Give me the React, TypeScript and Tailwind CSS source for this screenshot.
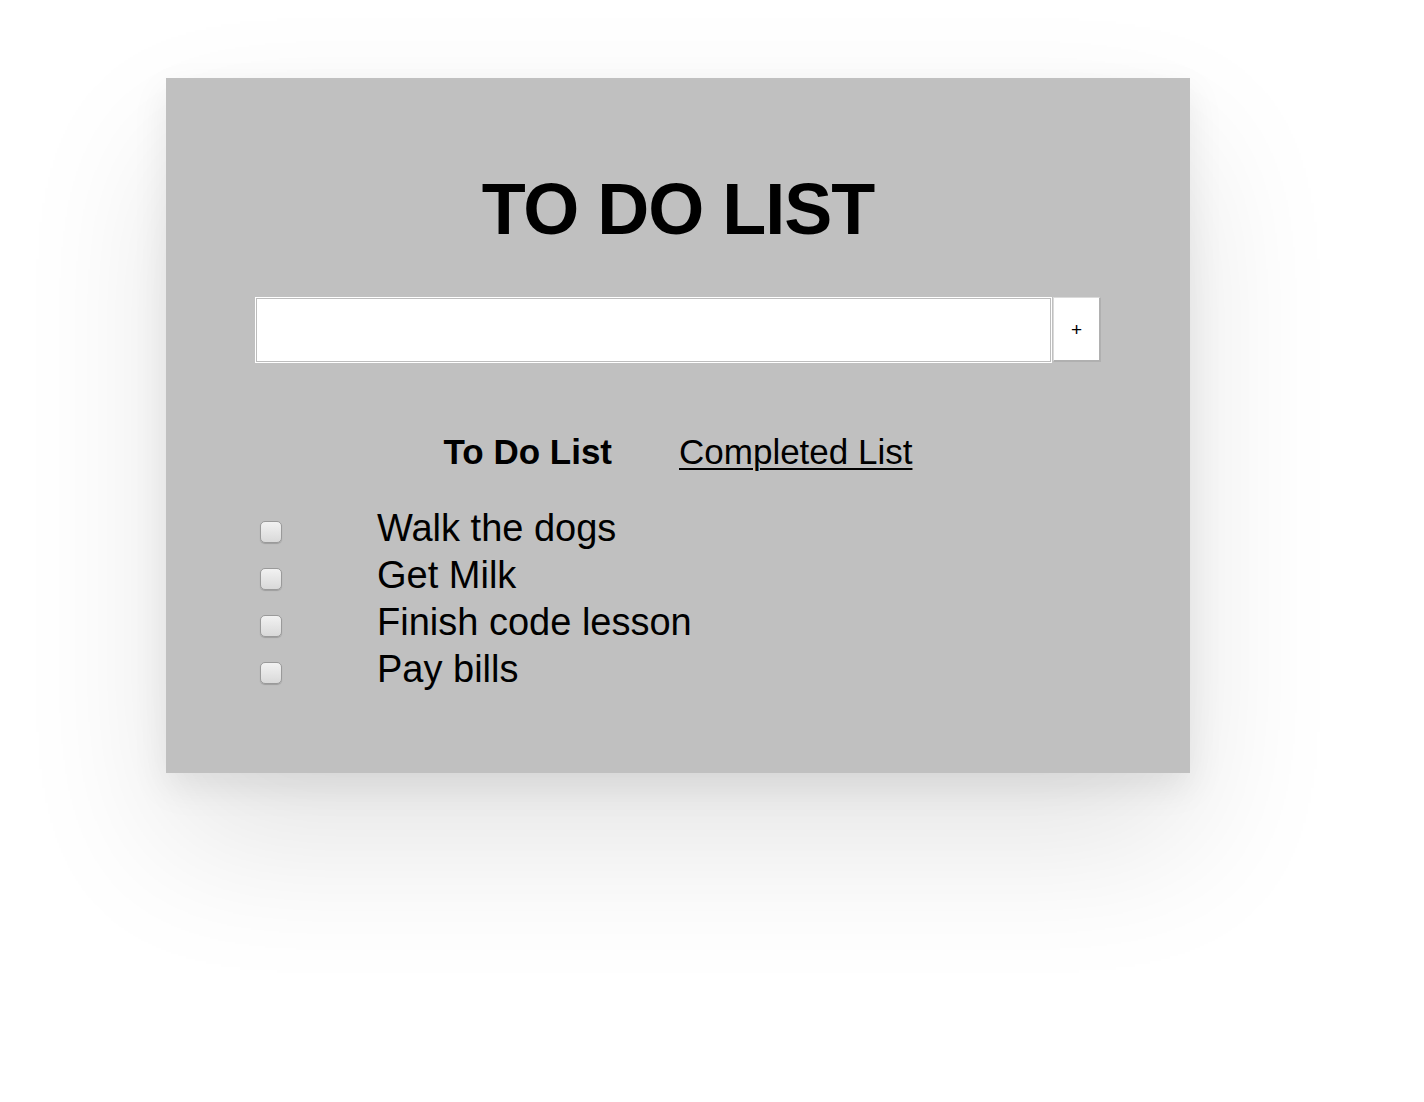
import * as React from 'react';

const todos = ['Walk the dogs', 'Get Milk', 'Finish code lesson', 'Pay bills'];

function Checkbox() {
  return (
    <span className="mt-[16px] block h-[22px] w-[22px] shrink-0 rounded-[5px] border border-[#9a9a9a] bg-gradient-to-b from-[#f2f2f2] to-[#d9d9d9] shadow-[0_1px_1px_rgba(0,0,0,0.18)]" />
  );
}

export default function App() {
  const [text, setText] = React.useState('');

  return (
    <div className="min-h-[1102px] bg-white pt-[78px] pl-[166px] font-['Liberation_Sans',Arial,sans-serif] text-black">
      <div className="w-[1024px] h-[695px] bg-[#c0c0c0] px-[89px] pt-[95px] shadow-[0_70px_140px_rgba(0,0,0,0.11),0_14px_34px_rgba(0,0,0,0.08)]">
        {/* Title */}
        <h1 className="text-center text-[72px] font-bold leading-none tracking-[-1px]">TO DO LIST</h1>

        {/* Input */}
        <div className="mt-[52px] flex h-[66px]">
          <input
            type="text"
            value={text}
            onChange={(e) => setText(e.target.value)}
            className="h-[66px] w-[797px] border border-white bg-white px-3 text-2xl shadow-[inset_0_0_0_1px_#bdbdbd] outline-none"
          />
          <button className="ml-[1px] h-[65px] w-[48px] border-l border-t border-r-2 border-b-2 border-l-[#dadada] border-t-[#dadada] border-r-[#b0b0b0] border-b-[#b0b0b0] bg-white text-[19px] leading-none">
            +
          </button>
        </div>

        {/* Tabs */}
        <div className="mt-[69px] flex justify-center gap-[67px] text-[35px] leading-[40px]">
          <span className="font-bold">To Do List</span>
          <a href="#" className="underline underline-offset-[4px] decoration-[2px]">Completed List</a>
        </div>

        {/* Items */}
        <ul className="mt-[33px]">
          {todos.map((t) => (
            <li key={t} className="flex h-[47px] pl-[5px]">
              <Checkbox />
              <span className="ml-[95px] text-[38px] leading-[47px]">{t}</span>
            </li>
          ))}
        </ul>
      </div>
    </div>
  );
}
